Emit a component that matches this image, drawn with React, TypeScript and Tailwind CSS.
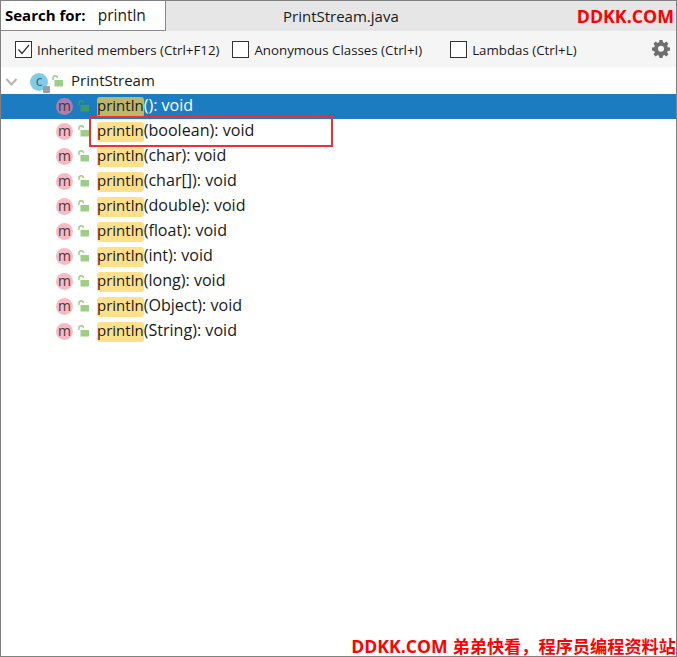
import React from 'react'

const font = "font-['Open_Sans','Noto_Sans_CJK_SC',sans-serif]"

const methods = [
  '(): void',
  '(boolean): void',
  '(char): void',
  '(char[]): void',
  '(double): void',
  '(float): void',
  '(int): void',
  '(long): void',
  '(Object): void',
  '(String): void',
]

const Lock = ({ color }: { color: string }) => (
  <svg width="12" height="12" viewBox="0 0 12 12" className="shrink-0">
    <path d="M1 5V3C1 1.800 1.900 .8 3.200 .8S5.400 1.800 5.400 3" fill="none" stroke={color} strokeWidth="1.400" />
    <rect x="2.500" y="5" width="8.500" height="6.500" fill={color} />
  </svg>
)

const Check = ({ checked, label }: { checked?: boolean; label: string }) => (
  <div className="flex items-center gap-[5px]">
    <div className="flex h-[17px] w-[17px] items-center justify-center border-[1.5px] border-[#333] bg-white">
      {checked && (
        <svg width="13" height="13" viewBox="0 0 13 13">
          <path d="M1.500 6.500L5 10.500L12 2" fill="none" stroke="#333" strokeWidth="1.200" />
        </svg>
      )}
    </div>
    <span className="pt-[3px] text-[13.3px] text-[#1a1a1a]">{label}</span>
  </div>
)

const Row = ({ rest, selected }: { rest: string; selected: boolean }) => (
  <div className={`flex h-[25px] items-center pl-[55px] ${selected ? 'bg-[#1b7cc2] text-white' : 'text-[#1a1a1a]'}`}>
    <div className={`flex h-[17px] w-[17px] items-center justify-center rounded-full pb-[2px] text-[14px] leading-none text-[#4a3a3a] ${selected ? 'bg-[#a97fb0]' : 'bg-[#f9b9c4]'}`}>
      m
    </div>
    <div className="mb-[2px] ml-[5px]">
      <Lock color={selected ? '#3f9a5e' : '#9ccf86'} />
    </div>
    <span className={`ml-[7px] h-[20px] rounded-[3px] text-[15px] leading-[16px] text-[#1a1a1a] ${selected ? 'bg-[#bdb76b]' : 'bg-[#ffe08a]'}`}>println</span>
    <span className="h-[20px] text-[16.100px] leading-[16px]">{rest}</span>
  </div>
)

export default function App() {
  return (
    <div className={`relative flex h-[657px] w-[677px] flex-col border border-[#808080] bg-white ${font}`}>
      <div className="flex h-[30px] items-center bg-[#e6e6e6]">
        <div className="flex h-full w-[165px] items-center gap-[12px] border-r border-b border-[#8a8a8a] bg-white pl-[4px]">
          <span className="text-[15px] font-bold text-black">Search for:</span>
          <span className="text-[15.500px] text-[#1a1a1a]">println</span>
        </div>
        <div className="ml-[117px] text-[15px] text-[#1a1a1a]">PrintStream.java</div>
        <div className="mr-[2px] ml-auto text-[17.800px] font-bold text-[#ff0000]">DDKK.COM</div>
      </div>
      <div className="flex h-[36px] items-center bg-[#f5f5f5] pr-[6px] pl-[14px]">
        <Check checked label="Inherited members (Ctrl+F12)" />
        <div className="ml-[13px]">
          <Check label="Anonymous Classes (Ctrl+I)" />
        </div>
        <div className="ml-[28px]">
          <Check label="Lambdas (Ctrl+L)" />
        </div>
        <svg width="18" height="18" viewBox="0 0 24 24" className="ml-auto" fill="#6e6e6e">
          <path fillRule="evenodd" d="M10 1h4l.6 3.100 1.900.8L19.100 3.100 22 6l-1.800 2.600.8 1.900L24 11v4l-3 .6-.8 1.900L22 20l-2.900 2.900-2.600-1.800-1.900.8L14 25h-4l-.6-3.100-1.900-.8L4.900 22.900 2 20l1.800-2.500-.8-1.900L0 15v-4l3-.5.8-1.900L2 6l2.900-2.900 2.600 1.800 1.900-.8zM12 8.500a4 4 0 100 8 4 4 0 000-8z" transform="translate(0 -1)" />
        </svg>
      </div>
      <div className="mt-[2px] text-[15px]">
        <div className="flex h-[25px] items-center pl-[4px] text-[#1a1a1a]">
          <svg width="14" height="10" viewBox="0 0 14 10">
            <path d="M1.500 2L6.500 7.500L11.500 2" fill="none" stroke="#b4b4b4" strokeWidth="2" />
          </svg>
          <div className="relative ml-[11px] flex h-[18px] w-[18px] items-center justify-center rounded-full bg-[#7fcbe8] pb-[2px] text-[14px] leading-none text-[#4a5a66]">
            c
            <div className="absolute right-[-2px] bottom-[-2px] h-[7px] w-[7px] rounded-[1px] bg-[#9a9fa5]" />
          </div>
          <div className="mb-[2px] ml-[4px]">
            <Lock color="#9ccf86" />
          </div>
          <span className="mb-[4px] ml-[7px] text-[15px] leading-[20px]">PrintStream</span>
        </div>
        {methods.map((rest, i) => (
          <Row key={rest} rest={rest} selected={i === 0} />
        ))}
      </div>
      <div className="absolute top-[115px] left-[88px] h-[31px] w-[244px] border-[2.500px] border-[#f03030]" />
      <div className="absolute right-0 bottom-0 leading-[18px] font-bold whitespace-nowrap text-[#ff0000]">
        <span className="text-[17.600px]">DDKK.COM</span>
        <span className="ml-[5px] text-[17.200px]">弟弟快看，程序员编程资料站</span>
      </div>
    </div>
  )
}
